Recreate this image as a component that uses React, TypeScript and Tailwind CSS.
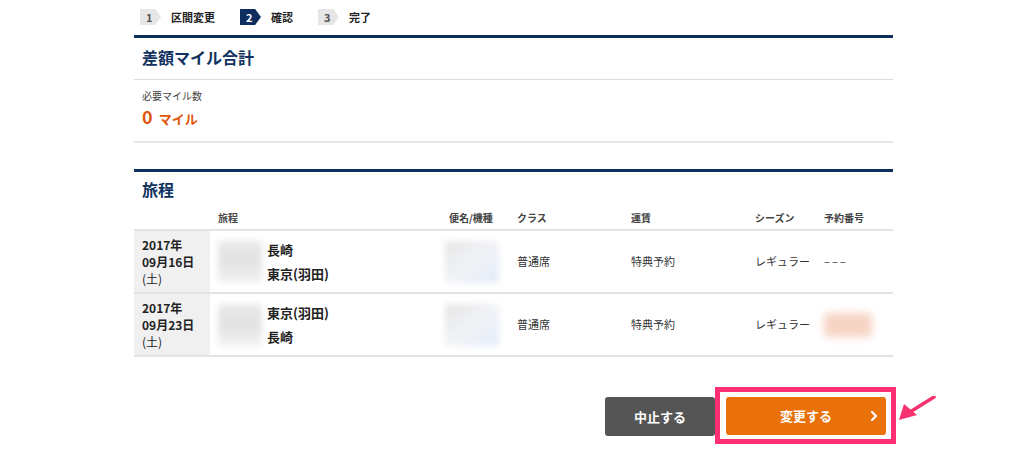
import { ChevronRight } from "lucide-react";

const font = "font-['Noto_Sans_CJK_JP','Noto_Sans',sans-serif]";

type Step = { no: string; label: string; active?: boolean };

const steps: Step[] = [
  { no: "1", label: "区間変更" },
  { no: "2", label: "確認", active: true },
  { no: "3", label: "完了" },
];

const rows = [
  { year: "2017年", day: "09月16日", from: "長崎", to: "東京(羽田)", booking: null },
  { year: "2017年", day: "09月23日", from: "東京(羽田)", to: "長崎", booking: "x" },
];

const cols = "grid grid-cols-[76px_231px_68px_114px_124px_69px_77px]";

function Blur({ className }: { className: string }) {
  return <div className={"rounded-sm bg-gradient-to-b from-[#e9e9e9] via-[#e2e2e2] to-[#f3f3f3] blur-[3px] " + className} />;
}

export default function App() {
  return (
    <div className={`${font} min-h-[457px] bg-white text-[#333]`}>
      <div className="ml-[134px] w-[759px]">
        {/* steps */}
        <div className="flex h-[34px] items-center pl-[6px]">
          {steps.map((s) => (
            <div key={s.no} className="mr-[25px] flex items-center">
              <span
                className={
                  "flex h-[16px] w-[21px] items-center pl-[6px] text-[11px] font-bold [clip-path:polygon(0_0,72%_0,100%_50%,72%_100%,0_100%)] " +
                  (s.active ? "bg-[#0e2f5e] text-white" : "bg-[#e6e6e6] text-[#555]")
                }
              >
                {s.no}
              </span>
              <span className="ml-[10px] text-[11px] font-bold text-[#222]">{s.label}</span>
            </div>
          ))}
        </div>

        {/* mile section */}
        <section className="mt-[1px] border-t-[3px] border-[#0e2f5e]">
          <h2 className="flex h-[42px] items-center border-b border-[#dcdcdc] pb-[4px] pl-[8px] text-[16px] font-bold text-[#10325f]">
            差額マイル合計
          </h2>
          <div className="h-[63px] border-b-2 border-[#e6e6e6] pl-[8px] pt-[9px]">
            <p className="text-[10px] leading-[14px] text-[#444]">必要マイル数</p>
            <p className="mt-[1px] flex items-baseline font-bold text-[#e0560a]">
              <span className="text-[18px] leading-[24px]">0</span>
              <span className="ml-[6px] text-[13px]">マイル</span>
            </p>
          </div>
        </section>

        {/* itinerary section */}
        <section className="mt-[26px] border-t-[3px] border-[#0e2f5e]">
          <h2 className="flex h-[33px] items-center pl-[8px] pt-[1px] text-[16px] font-bold text-[#10325f]">旅程</h2>
          <div className={`${cols} h-[26px] items-center border-b-2 border-[#e3e3e3] text-[10px] font-bold text-[#444]`}>
            <span />
            <span className="pl-[8px]">旅程</span>
            <span className="pl-[8px]">便名/機種</span>
            <span className="pl-[8px]">クラス</span>
            <span className="pl-[8px]">運賃</span>
            <span className="pl-[8px]">シーズン</span>
            <span className="pl-[8px]">予約番号</span>
          </div>
          {rows.map((r, i) => (
            <div key={i} className={`${cols} h-[63px] items-stretch border-b-2 border-[#e3e3e3] text-[11px] text-[#333]`}>
              <div className="flex flex-col justify-center bg-[#f0f0f0] pl-[8px] text-[12px] font-bold leading-[17px] text-[#222]">
                <span>{r.year}</span>
                <span>{r.day}</span>
                <span className="font-normal">(土)</span>
              </div>
              <div className="flex items-center pl-[8px]">
                <Blur className="h-[42px] w-[44px]" />
                <div className="ml-[5px] flex flex-col gap-[5px] text-[13px] font-bold leading-[19px] text-[#222]">
                  <span>{r.from}</span>
                  <span>{r.to}</span>
                </div>
              </div>
              <div className="flex items-center pl-[4px]">
                <div className="h-[42px] w-[54px] rounded-sm bg-gradient-to-br from-[#e5e5e5] via-[#f0f2f6] to-[#e3ebf8] blur-[3px]" />
              </div>
              <div className="flex items-center pl-[8px]">普通席</div>
              <div className="flex items-center pl-[8px]">特典予約</div>
              <div className="flex items-center pl-[8px]">レギュラー</div>
              <div className="flex items-center pl-[8px]">
                {r.booking ? (
                  <div className="h-[24px] w-[48px] rounded bg-[#f5c8b4] opacity-80 blur-[4px]" />
                ) : (
                  <span className="tracking-[2px]">–––</span>
                )}
              </div>
            </div>
          ))}
        </section>

        {/* actions */}
        <div className="mt-[40px] flex justify-end gap-[11px] pr-[7px]">
          <button className="flex h-[39px] w-[110px] items-center justify-center rounded-[3px] bg-[#555] text-[13px] font-bold text-white">
            中止する
          </button>
          <div className="relative">
            <button className="relative flex h-[38px] w-[160px] items-center justify-center rounded-[3px] bg-[#ea7009] text-[13px] font-bold text-white">
              変更する
              <ChevronRight className="absolute right-[4px] h-4 w-4" strokeWidth={3.5} />
            </button>
            <div className="pointer-events-none absolute -left-[11px] -right-[10px] -top-[10px] -bottom-[8px] border-[5px] border-[#fb2f72]" />
            <svg className="pointer-events-none absolute -right-[50px] -top-[1px]" width="40" height="30" viewBox="0 0 40 30">
              <path d="M38 1 L14 16" stroke="#f7336f" strokeWidth="3.5" strokeLinecap="round" />
              <path d="M3 24 L8 8 L21 19 Z" fill="#f7336f" />
            </svg>
          </div>
        </div>
      </div>
    </div>
  );
}
